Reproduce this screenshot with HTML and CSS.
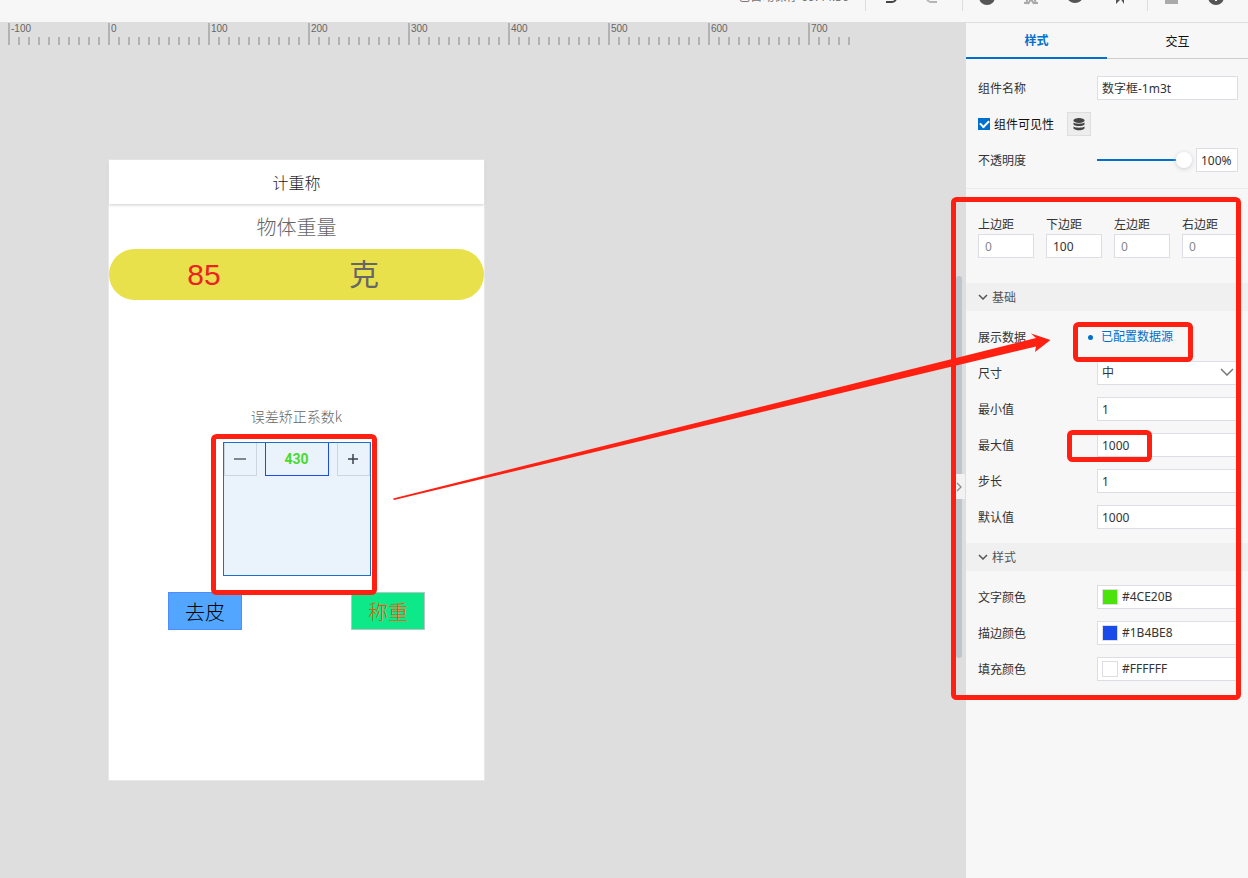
FILE: index.html
```html
<!DOCTYPE html>
<html lang="zh-CN">
<head>
<meta charset="utf-8">
<title>计重称</title>
<link rel="stylesheet" href="styles.css">
</head>
<body>
<div class="app">
  <header class="topbar">
    <div class="tools">
      <span class="saved">已自动保存 09:44:36</span>
      <span class="sep sep-a"></span>
      <button class="tool undo" aria-label="撤销"><svg width="16" height="16" viewBox="0 0 16 16" fill="none" stroke="#444" stroke-width="2"><path d="M2 5h8a4 4 0 0 1 0 8H4M5 2L2 5l3 3"/></svg></button>
      <button class="tool redo" aria-label="重做"><svg width="16" height="16" viewBox="0 0 16 16" fill="none" stroke="#b5b5b5" stroke-width="2"><path d="M14 5H6a4 4 0 0 0 0 8h6M11 2l3 3-3 3"/></svg></button>
      <span class="sep sep-b"></span>
      <button class="tool t1" aria-label="帮助"><svg width="16" height="16" viewBox="0 0 16 16"><circle cx="8" cy="8" r="8" fill="#555"/><path d="M8 3v8" stroke="#fff" stroke-width="2"/></svg></button>
      <button class="tool t2" aria-label="调试"><svg width="16" height="16" viewBox="0 0 16 16" fill="none" stroke="#aaa" stroke-width="2"><path d="M8 2v8M5 8l-2 7M11 8l2 7M8 10l-3 5M8 10l3 5M1 14h4M11 14h4"/></svg></button>
      <button class="tool t3" aria-label="预览"><svg width="16" height="16" viewBox="0 0 16 16"><ellipse cx="8" cy="7" rx="8" ry="7" fill="#555"/></svg></button>
      <button class="tool t4" aria-label="发布"><svg width="16" height="16" viewBox="0 0 16 16" fill="#555"><path d="M5 2v13l4-4V9l4 6V9h-3z"/></svg></button>
      <span class="sep sep-c"></span>
      <button class="tool t5" aria-label="保存"><svg width="16" height="16" viewBox="0 0 16 16"><path d="M2 2h13v13H2z" fill="#aaa"/></svg></button>
      <button class="tool t6" aria-label="更多"><svg width="16" height="16" viewBox="0 0 16 16"><circle cx="8" cy="8" r="8" fill="#555"/><path d="M8 3v9" stroke="#fff" stroke-width="2"/></svg></button>
    </div>
  </header>
  <main class="workspace">
    <section class="stage">
      <div class="ruler">
        <span class="mark">-100</span><span class="mark">0</span><span class="mark">100</span><span class="mark">200</span><span class="mark">300</span><span class="mark">400</span><span class="mark">500</span><span class="mark">600</span><span class="mark last">700</span>
      </div>
      <div class="phone">
        <h1 class="phone-title">计重称</h1>
        <p class="caption">物体重量</p>
        <div class="weight"><span class="value">85</span><span class="unit">克</span></div>
        <label class="factor-label" for="factor">误差矫正系数k</label>
        <div class="stepper">
          <button class="step" aria-label="减少"><svg width="12" height="12" viewBox="0 0 12 12"><path d="M0 6h12" stroke="#80878e" stroke-width="2"/></svg></button>
          <input class="factor" id="factor" value="430">
          <button class="step" aria-label="增加"><svg width="12" height="12" viewBox="0 0 12 12"><path d="M1 6h10M6 1v10" stroke="#3c4248" stroke-width="1.500"/></svg></button>
        </div>
        <div class="actions"><button class="action tare">去皮</button><button class="action weigh">称重</button></div>
      </div>
      <div class="scrollbar"></div>
      <button class="collapse" aria-label="收起面板"><svg width="8" height="10" viewBox="0 0 8 10" fill="none" stroke="#888" stroke-width="1.300"><path d="M2 1l4 4-4 4"/></svg></button>
    </section>
    <aside class="panel">
      <nav class="tabs"><button class="tab active">样式</button><button class="tab">交互</button></nav>
      <div class="group general">
        <div class="row"><label class="key" for="name">组件名称</label><input class="field name" id="name" value="数字框-1m3t"></div>
        <div class="row visible"><input type="checkbox" class="check" id="vis" checked><label class="key" for="vis">组件可见性</label><button class="data" aria-label="数据源"><svg width="12" height="13" viewBox="0 0 12 13" fill="#444"><ellipse cx="6" cy="2.500" rx="5.500" ry="2.500"/><path d="M.5 4.500c2 1.600 9 1.600 11 0v2c-2 2-9 2-11 0zM.5 8.500c2 1.600 9 1.600 11 0v2c-2 2.400-9 2.400-11 0z"/></svg></button></div>
        <div class="row"><label class="key" for="opacity">不透明度</label><div class="opacity"><input type="range" class="slider" id="opacity" value="100"><input class="field percent" aria-label="不透明度数值" value="100%"></div></div>
      </div>
      <div class="margins">
        <label>上边距<input class="field muted" value="0"></label>
        <label>下边距<input class="field" value="100"></label>
        <label>左边距<input class="field muted" value="0"></label>
        <label>右边距<input class="field muted" value="0"></label>
      </div>
      <h2 class="section"><svg width="10" height="6" viewBox="0 0 10 6" fill="none" stroke="#555" stroke-width="1.500"><path d="M1 1l4 4 4-4"/></svg><span class="key">基础</span></h2>
      <div class="group">
        <div class="row"><span class="key">展示数据</span><a class="source" href="#">已配置数据源</a></div>
        <div class="row"><label class="key" for="size">尺寸</label><div class="select"><select class="field" id="size"><option>中</option></select><svg class="arrow" width="14" height="8" viewBox="0 0 14 8" fill="none" stroke="#777" stroke-width="1.500"><path d="M1 1l6 6 6-6"/></svg></div></div>
        <div class="row"><label class="key" for="min">最小值</label><input class="field" id="min" value="1"></div>
        <div class="row"><label class="key" for="max">最大值</label><input class="field" id="max" value="1000"></div>
        <div class="row"><label class="key" for="stepv">步长</label><input class="field" id="stepv" value="1"></div>
        <div class="row"><label class="key" for="def">默认值</label><input class="field" id="def" value="1000"></div>
      </div>
      <h2 class="section"><svg width="10" height="6" viewBox="0 0 10 6" fill="none" stroke="#555" stroke-width="1.500"><path d="M1 1l4 4 4-4"/></svg><span class="key">样式</span></h2>
      <div class="group">
        <div class="row"><label class="key" for="c1">文字颜色</label><div class="field color"><span class="swatch green"></span><input id="c1" value="#4CE20B"></div></div>
        <div class="row"><label class="key" for="c2">描边颜色</label><div class="field color"><span class="swatch blue"></span><input id="c2" value="#1B4BE8"></div></div>
        <div class="row"><label class="key" for="c3">填充颜色</label><div class="field color"><span class="swatch white"></span><input id="c3" value="#FFFFFF"></div></div>
      </div>
    </aside>
  </main>
  <svg class="notes" width="1248" height="878" viewBox="0 0 1248 878" fill="none" stroke="#ff2012" stroke-width="5">
    <rect x="213.500" y="436.500" width="161" height="156" rx="3"/>
    <rect x="953.500" y="199.500" width="285" height="498" rx="3"/>
    <rect x="1075.500" y="324.500" width="115" height="35" rx="3"/>
    <rect x="1069.500" y="432.500" width="80" height="27" rx="3"/>
    <path d="M393 498.500L1036 338l-5-4.500 19.500 6.500L1035 352l1-5.500L394 500z" fill="#ff2012" stroke="none"/>
  </svg>
</div>
</body>
</html>
```

FILE: styles.css
```css
* { box-sizing: border-box; }
body {
  margin: 0;
  font: 12px/16px "Noto Sans", "Noto Sans CJK SC", sans-serif;
  color: #333;
}
button, input, select { font: inherit; color: inherit; margin: 0; padding: 0; }
button { border: 0; background: none; }
h1, h2, p { margin: 0; font-weight: 400; }
.app { position: relative; min-height: 100vh; display: flex; flex-direction: column; overflow: hidden; }

.topbar { height: 22px; display: flex; align-items: flex-end; justify-content: flex-end; overflow: hidden; background: #f7f7f7; }
.tools { display: flex; align-items: center; height: 50px; flex: none; padding-right: 24px; }
.tool { width: 16px; height: 16px; display: flex; flex: none; }
.saved { color: #777; white-space: nowrap; }
.sep { width: 1px; height: 28px; background: #ddd; }
.sep-a { margin: 0 16px; }
.undo { margin-right: 27px; }
.sep-b { margin: 0 16px 0 21px; }
.t1, .t2, .t3 { margin-right: 28px; }
.t4 { margin-right: 20px; }
.sep-c { margin-right: 15px; }
.t5 { margin-right: 29px; }

.workspace { flex: 1; display: flex; }
.stage { position: relative; flex: 1; background: #dedede; min-width: 0; }
.ruler { display: flex; height: 23px; padding: 1px 0 0 8px; }
.mark {
  width: 100px; flex: none; padding-left: 1px;
  border-left: 2px solid #b3b3b3;
  font: 10px/11px "Liberation Sans", sans-serif; color: #666;
  background: repeating-linear-gradient(90deg, transparent 0 8px, #b3b3b3 8px 10px) 0 100% / 100% 8px no-repeat;
}
.last { width: 42px; }

.phone { width: 377px; height: 622px; margin: 114px 0 0 108px; background: #fff; border: 1px solid #e8e8e8; display: flex; flex-direction: column; align-items: center; }
.phone-title { align-self: stretch; height: 44px; font: 300 16px/44px "Noto Sans CJK SC", sans-serif; text-align: center; color: #222; box-shadow: 0 1px 3px #ccc; }
.caption { color: #666; font: 300 20px/44px "Noto Sans CJK SC", sans-serif; padding-top: 1px; }
.weight { align-self: stretch; height: 51px; border-radius: 26px; background: #e9e14c; display: grid; grid-template-columns: 190px 1fr; text-align: center; font: 30px/52px "Liberation Sans", "Noto Sans CJK SC", sans-serif; color: #666; }
.value { color: #eb2323; }
.unit { padding-right: 55px; }
.factor-label { margin-top: 107px; font: 300 14px/18px "Noto Sans CJK SC", sans-serif; color: #666; }
.stepper { margin-top: 17px; width: 148px; height: 134px; border: 1px solid #1a6fcb; background: #eaf3fc; display: flex; justify-content: space-between; align-items: flex-start; }
.step { width: 33px; height: 33px; border: 1px solid #cdd5de; border-top: 0; display: flex; align-items: center; justify-content: center; }
.factor { width: 64px; height: 33px; border: 1px solid #1b4be8; border-top: 0; background: none; color: #48d92f; text-align: center; font: 700 14px/20px Roboto, sans-serif; border-radius: 0; }
.actions { margin-top: 16px; width: 257px; display: flex; justify-content: space-between; }
.action { width: 74px; height: 38px; border: 1px solid #4e8cff; background: #52a6ff; color: #000; font: 300 20px/30px "Noto Sans CJK SC", sans-serif; padding-top: 2px; }
.action.weigh { background: #0de989; border-color: #b9c5c4; color: #f5520a; }
.scrollbar { position: absolute; right: 4px; top: 254px; width: 6px; height: 382px; border-radius: 3px; background: #bec5cd; }
.collapse { position: absolute; right: 1px; top: 452px; width: 12px; height: 25px; background: #f2f2f2; display: flex; align-items: center; justify-content: center; }

.panel { width: 282px; flex: none; background: #f7f7f7; border-top: 1px solid #dedede; }
.tabs { display: flex; height: 36px; }
.tab { flex: 1; border-bottom: 1px solid #ccc; color: #111; padding-top: 2px; }
.active { border-bottom: 2px solid #0070cc; color: #0070cc; font-weight: 700; }
.group { display: flex; flex-direction: column; gap: 12px; padding: 14px 10px 14px 12px; }
.general { padding-top: 17px; padding-bottom: 16px; border-bottom: 1px solid #ebebeb; }
.row { display: grid; grid-template-columns: 119px 1fr; align-items: center; height: 24px; }
.key { padding-top: 2px; }
.field { width: 100%; min-width: 0; height: 24px; padding: 0 4px; border: 1px solid #dcdee3; border-radius: 0; background: #fff; outline: 0; }
.visible { display: flex; color: #111; }
.check { appearance: none; width: 12px; height: 12px; margin-right: 4px; background: #0070cc; display: grid; place-items: center; }
.check::after { content: ""; width: 7px; height: 4px; border: solid #fff; border-width: 0 0 2px 2px; transform: rotate(-45deg); margin-bottom: 2px; }
.data { width: 24px; height: 24px; margin-left: 13px; border: 1px solid #dedede; background: #ededed; display: grid; place-items: center; }
.opacity { display: flex; justify-content: space-between; }
.slider { appearance: none; width: 95px; height: 24px; background: linear-gradient(#0070cc, #0070cc) 0 11px / 82px 2px no-repeat; }
.slider::-webkit-slider-thumb { appearance: none; width: 16px; height: 16px; border-radius: 50%; background: #fff; box-shadow: 0 1px 4px #ccc; }
.percent { width: 42px; }
.margins { display: grid; grid-template-columns: repeat(4, 1fr); gap: 12px; padding: 28px 10px 25px 12px; }
.margins label { display: flex; flex-direction: column; gap: 1px; }
.margins .field { padding: 0 6px; }
.muted { color: #888; }
.section { display: flex; align-items: center; gap: 4px; height: 28px; padding-left: 12px; background: #f0f0f0; font-size: 12px; color: #555; }
.source { color: #0070cc; text-decoration: none; display: flex; align-items: center; gap: 8px; margin-left: -9px; }
.source::before { content: ""; width: 5px; height: 5px; border-radius: 50%; background: #0070cc; }
.select { position: relative; }
.select .field { appearance: none; display: block; }
.arrow { position: absolute; right: 4px; top: 7px; }
.color { display: flex; align-items: center; gap: 4px; }
.color input { border: 0; width: 90px; background: none; }
.swatch { width: 16px; height: 16px; border: 1px solid #dcdee3; }
.green { background: #4ce20b; }
.blue { background: #1b4be8; }
.white { background: #fff; }
.notes { position: absolute; left: 0; top: 0; pointer-events: none; }
```
